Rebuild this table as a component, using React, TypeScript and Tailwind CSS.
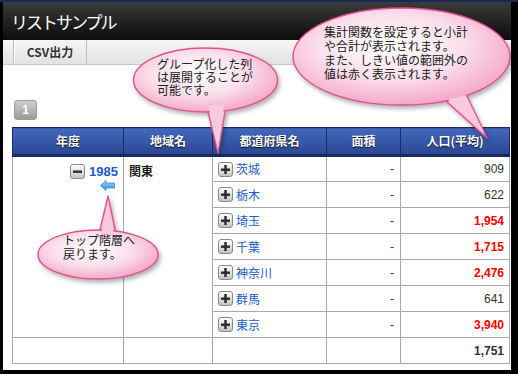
import React from "react";

const jp = "font-['Noto_Sans_CJK_JP','Noto_Sans',sans-serif]";

type Row = { pref: string; area: string; pop: string; red: boolean };

const rows: Row[] = [
  { pref: "茨城", area: "-", pop: "909", red: false },
  { pref: "栃木", area: "-", pop: "622", red: false },
  { pref: "埼玉", area: "-", pop: "1,954", red: true },
  { pref: "千葉", area: "-", pop: "1,715", red: true },
  { pref: "神奈川", area: "-", pop: "2,476", red: true },
  { pref: "群馬", area: "-", pop: "641", red: false },
  { pref: "東京", area: "-", pop: "3,940", red: true },
];

function ToggleBox({ plus }: { plus: boolean }) {
  return (
    <div className="w-[15px] h-[15px] rounded-[3px] border border-[#8c8c8c] bg-gradient-to-b from-[#ffffff] to-[#c4c4c4] flex items-center justify-center shrink-0">
      <svg width="11" height="11" viewBox="0 0 11 11">
        <rect x="1" y="4.5" width="9" height="2.4" fill="#2a2a2a" />
        {plus && <rect x="4.3" y="1" width="2.4" height="9" fill="#2a2a2a" />}
      </svg>
    </div>
  );
}

function BackArrow() {
  return (
    <svg width="15" height="11" viewBox="0 0 15 11">
      <defs>
        <linearGradient id="arr" x1="0" y1="0" x2="0" y2="1">
          <stop offset="0" stopColor="#9fd2f7" />
          <stop offset="1" stopColor="#2f8ee0" />
        </linearGradient>
      </defs>
      <path d="M0.5 5.5 L6 0.5 L6 3 L14.5 3 L14.5 8 L6 8 L6 10.5 Z" fill="url(#arr)" stroke="#3b8fd6" strokeWidth="0.8" />
    </svg>
  );
}

function Bubbles() {
  const shapes = [
    { cx: 205.5, cy: 80, rx: 72, ry: 32, tail: "207,108 226,106 218,153" },
    { cx: 401.5, cy: 56.5, rx: 108.5, ry: 48.5, tail: "446,101 467,96 487,138" },
    { cx: 98, cy: 254.5, rx: 60, ry: 24.5, tail: "99,234 116,234 108,196" },
  ];
  return (
    <svg className="absolute left-0 top-0 pointer-events-none drop-shadow-[2px_3px_2px_rgba(0,0,0,0.3)]" width="518" height="374">
      <defs>
        <radialGradient id="pink" cx="0.45" cy="0.4" r="0.6">
          <stop offset="0" stopColor="#ffffff" />
          <stop offset="0.55" stopColor="#fbe0ec" />
          <stop offset="1" stopColor="#f4a9c8" />
        </radialGradient>
      </defs>
      {shapes.map((s, i) => (
        <g key={i}>
          <polygon points={s.tail} fill="#f6c4d9" stroke="#e2528f" strokeWidth="1.4" strokeLinejoin="round" />
          <ellipse cx={s.cx} cy={s.cy} rx={s.rx} ry={s.ry} fill="url(#pink)" stroke="#e2528f" strokeWidth="1.4" />
        </g>
      ))}
      <polygon points="208.5,106 224.5,104 218,148" fill="#f7cade" />
      <polygon points="448,99.5 465.5,95 484,133" fill="#f7cade" />
      <polygon points="100.8,236 114.2,236 108,201" fill="#f7cade" />
    </svg>
  );
}

export default function App() {
  return (
    <div className={`relative w-[518px] h-[374px] bg-black flex flex-col ${jp}`}>
      <div className="h-[2px] bg-[#1c2757]" />
      <div className="flex">
        <div className="w-[3px]" />
        <div className="w-[508px] h-[368px] bg-white flex flex-col">
          <div className="h-[38px] bg-gradient-to-b from-[#3c3c3c] to-[#0c0c0c] flex items-center pl-[8px]">
            <span className="text-white text-[17px] leading-none tracking-[-2px]">リストサンプル</span>
          </div>
          <div className="h-[25px] bg-gradient-to-b from-[#f6f6f6] to-[#e2e2e2] border-b border-[#c8c8c8] flex pl-[10px]">
            <div className="w-[74px] border-l border-r border-l-[#bdbdbd] border-r-[#bdbdbd] shadow-[inset_1px_0_0_#ffffff] flex items-center justify-center">
              <span className="text-[12px] font-bold text-[#333]">CSV出力</span>
            </div>
          </div>
          <div className="pt-[35px] pl-[11px]">
            <div className="w-[23px] h-[20px] rounded-[3px] bg-gradient-to-b from-[#cfcfcf] to-[#9a9a9a] border border-[#9a9a9a] flex items-center justify-center">
              <span className="text-white text-[12px] font-bold font-['Liberation_Sans',sans-serif]">1</span>
            </div>
          </div>
          <div className="pt-[7px] pl-[9px]">
            <table className="border-collapse table-fixed w-[497px] text-[12px]">
              <colgroup>
                <col className="w-[111px]" />
                <col className="w-[89px]" />
                <col className="w-[114px]" />
                <col className="w-[74px]" />
                <col className="w-[109px]" />
              </colgroup>
              <thead>
                <tr className="h-[28px]">
                  {["年度", "地域名", "都道府県名", "面積", "人口(平均)"].map((h) => (
                    <th
                      key={h}
                      className="p-0 border border-[#1b2a62] border-b-[3px] border-b-[#1a2a60] bg-gradient-to-b from-[#4468bd] to-[#2a4792] text-white font-bold text-[12px] [text-shadow:0_1px_1px_#111]"
                    >
                      {h}
                    </th>
                  ))}
                </tr>
              </thead>
              <tbody>
                {rows.map((r, i) => (
                  <tr key={r.pref} className="h-[26px]">
                    {i === 0 && (
                      <>
                        <td rowSpan={7} className="p-0 border border-[#aaaaaa] align-top">
                          <div className="flex flex-col items-end pr-[5px] pt-[7px]">
                            <div className="flex items-center gap-[4px]">
                              <ToggleBox plus={false} />
                              <span className="text-[#1c5bc8] font-bold text-[13px] font-['Liberation_Sans',sans-serif] leading-[15px]">1985</span>
                            </div>
                            <div className="pr-[3px] pt-[1px]">
                              <BackArrow />
                            </div>
                          </div>
                        </td>
                        <td rowSpan={7} className="p-0 border border-[#aaaaaa] align-top pl-[5px] pt-[5px]">
                          <span className="font-bold text-[12px] text-[#222]">関東</span>
                        </td>
                      </>
                    )}
                    <td className="p-0 border border-[#aaaaaa]">
                      <div className="flex items-center gap-[3px] pl-[5px]">
                        <ToggleBox plus={true} />
                        <span className="text-[#1c5bc8] text-[12px] leading-none">{r.pref}</span>
                      </div>
                    </td>
                    <td className="p-0 border border-[#aaaaaa] text-right pr-[6px] text-[#333] font-['Liberation_Sans',sans-serif]">
                      {r.area}
                    </td>
                    <td
                      className={`p-0 border border-[#aaaaaa] text-right pr-[5px] text-[12px] font-['Liberation_Sans',sans-serif] ${
                        r.red ? "text-[#ff0000] font-bold" : "text-[#333]"
                      }`}
                    >
                      {r.pop}
                    </td>
                  </tr>
                ))}
                <tr className="h-[26px]">
                  <td className="p-0 border border-[#aaaaaa]" />
                  <td className="p-0 border border-[#aaaaaa]" />
                  <td className="p-0 border border-[#aaaaaa]" />
                  <td className="p-0 border border-[#aaaaaa]" />
                  <td className="p-0 border border-[#aaaaaa] text-right pr-[5px] font-bold text-[#333] font-['Liberation_Sans',sans-serif]">
                    1,751
                  </td>
                </tr>
              </tbody>
            </table>
          </div>
        </div>
      </div>
      <Bubbles />
      <div className="absolute left-[157px] top-[57px] text-[12px] leading-[13px] text-[#222] whitespace-nowrap">
        グループ化した列
        <br />
        は展開することが
        <br />
        可能です。
      </div>
      <div className="absolute left-[324px] top-[25px] text-[12px] leading-[14px] text-[#222] whitespace-nowrap">
        集計関数を設定すると小計
        <br />
        や合計が表示されます。
        <br />
        また、しきい値の範囲外の
        <br />
        値は赤く表示されます。
      </div>
      <div className="absolute left-[63px] top-[233px] text-[12px] leading-[14px] text-[#222] whitespace-nowrap">
        トップ階層へ
        <br />
        戻ります。
      </div>
    </div>
  );
}
